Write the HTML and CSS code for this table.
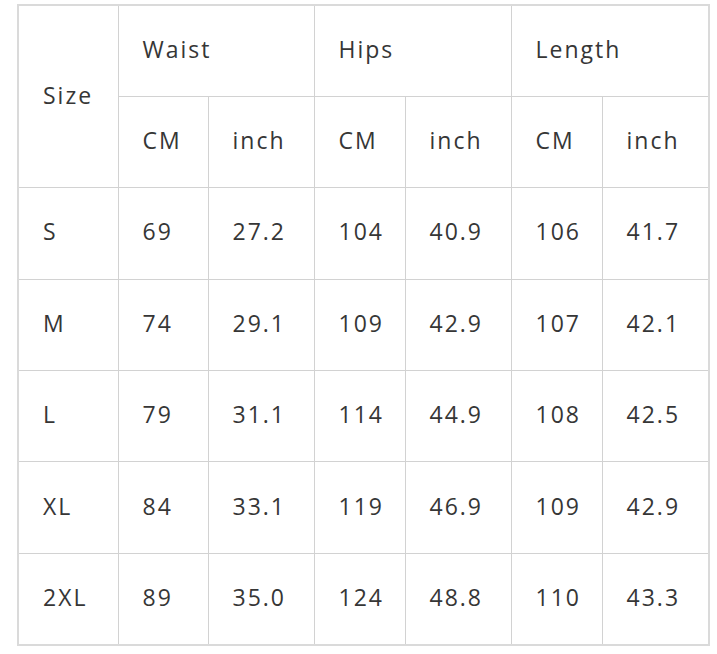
FILE: index.html
```html
<!DOCTYPE html>
<html>
<head>
<meta charset="utf-8">
<link rel="stylesheet" href="styles.css">
</head>
<body>
<table class="size-table">
  <colgroup>
    <col class="c-size"><col class="c-a"><col class="c-b"><col class="c-c"><col class="c-d"><col class="c-e"><col class="c-f">
  </colgroup>
  <thead>
    <tr>
      <th rowspan="2">Size</th>
      <th colspan="2">Waist</th>
      <th colspan="2">Hips</th>
      <th colspan="2">Length</th>
    </tr>
    <tr>
      <th>CM</th><th>inch</th><th>CM</th><th>inch</th><th>CM</th><th>inch</th>
    </tr>
  </thead>
  <tbody>
    <tr><td>S</td><td>69</td><td>27.2</td><td>104</td><td>40.9</td><td>106</td><td>41.7</td></tr>
    <tr><td>M</td><td>74</td><td>29.1</td><td>109</td><td>42.9</td><td>107</td><td>42.1</td></tr>
    <tr><td>L</td><td>79</td><td>31.1</td><td>114</td><td>44.9</td><td>108</td><td>42.5</td></tr>
    <tr><td>XL</td><td>84</td><td>33.1</td><td>119</td><td>46.9</td><td>109</td><td>42.9</td></tr>
    <tr><td>2XL</td><td>89</td><td>35.0</td><td>124</td><td>48.8</td><td>110</td><td>43.3</td></tr>
  </tbody>
</table>
</body>
</html>
```
FILE: styles.css
```css
html, body {
  margin: 0;
  background: #ffffff;
}
body {
  padding: 4px 0 0 17px;
  font-family: "Open Sans", "DejaVu Sans", sans-serif;
  color: #363636;
}
.size-table {
  border-collapse: collapse;
  table-layout: fixed;
  width: 691px;
  border: 2px solid #dadada;
}
.c-size { width: 100px; }
.c-a { width: 90px; }
.c-b { width: 106px; }
.c-c { width: 91px; }
.c-d { width: 106px; }
.c-e { width: 91px; }
.c-f { width: 107px; }
.size-table tr {
  height: 91.4px;
}
.size-table th,
.size-table td {
  border: 1px solid #d2d2d2;
  padding: 0 0 3px 24px;
  text-align: left;
  vertical-align: middle;
  font-size: 23px;
  font-weight: 400;
  letter-spacing: 2px;
  line-height: 1;
}
```
